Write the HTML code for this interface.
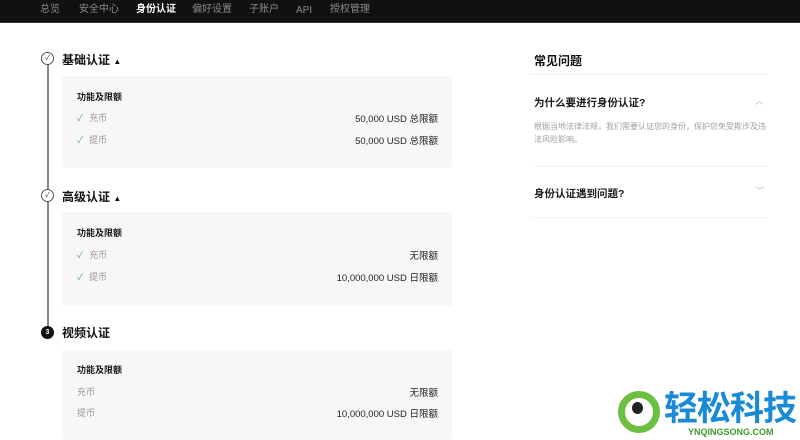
<!DOCTYPE html>
<html><head><meta charset="utf-8"><style>
*{margin:0;padding:0;box-sizing:border-box}
body{width:800px;height:437px;overflow:hidden;background:#fff;font-family:"Liberation Sans","Noto Sans CJK SC",sans-serif;position:relative;color:#1a1a1a}
.nav{position:absolute;left:0;top:0;width:800px;height:23px;background:#111;border-bottom:1px solid #333}
.nav span{position:absolute;top:3px;font-size:10px;line-height:14px;color:#8a8a8a}
.nav span.a{color:#fff;font-weight:bold}
.abs{position:absolute}
.h{font-size:12px;font-weight:bold;color:#111}
.card{position:absolute;left:62px;width:390px;background:#f7f7f7;border-radius:3px}
.t{font-size:9px;font-weight:bold;position:absolute;left:15px}
.l{font-size:9px;color:#999;position:absolute;left:15px}
.l .c{color:#5cae8a;margin-right:6px}
.r{font-size:9.5px;color:#222;position:absolute;right:14px}
.line{position:absolute;left:47px;width:2px;background:#888}
.circ{position:absolute;width:13px;height:13px;border-radius:50%;border:1.2px solid #555;background:#fff;font-size:7px;text-align:center;line-height:11px;color:#333}
</style></head><body>
<div class="nav">
<span style="left:40px">总览</span><span style="left:79px">安全中心</span><span class="a" style="left:136px">身份认证</span><span style="left:192px">偏好设置</span><span style="left:249px">子账户</span><span style="left:296px;top:4px">API</span><span style="left:330px">授权管理</span>
</div>
<div class="line" style="top:64px;height:262px"></div>
<div class="circ" style="left:41px;top:52px">✓</div>
<div class="circ" style="left:41px;top:189px">✓</div>
<div class="circ" style="left:41px;top:326px;background:#111;border-color:#111;color:#fff;font-weight:bold">3</div>
<div class="abs h" style="left:62px;top:51px">基础认证 <span style="font-size:8px">▲</span></div>
<div class="abs h" style="left:62px;top:188px">高级认证 <span style="font-size:8px">▲</span></div>
<div class="abs h" style="left:62px;top:324px">视频认证</div>

<div class="card" style="top:76px;height:92px">
<div class="t" style="top:14px">功能及限额</div>
<div class="l" style="top:35px"><span class="c">✓</span>充币</div><div class="r" style="top:35px">50,000 USD 总限额</div>
<div class="l" style="top:57px"><span class="c">✓</span>提币</div><div class="r" style="top:57px">50,000 USD 总限额</div>
</div>
<div class="card" style="top:212px;height:94px">
<div class="t" style="top:14px">功能及限额</div>
<div class="l" style="top:36px"><span class="c">✓</span>充币</div><div class="r" style="top:36px">无限额</div>
<div class="l" style="top:58px"><span class="c">✓</span>提币</div><div class="r" style="top:58px">10,000,000 USD 日限额</div>
</div>
<div class="card" style="top:350px;height:90px">
<div class="t" style="top:13px">功能及限额</div>
<div class="l" style="top:35px">充币</div><div class="r" style="top:35px">无限额</div>
<div class="l" style="top:56px">提币</div><div class="r" style="top:56px">10,000,000 USD 日限额</div>
</div>

<div class="abs h" style="left:534px;top:52px">常见问题</div>
<div class="abs" style="left:530px;top:74px;width:238px;height:1px;background:#f0f0f0"></div>
<div class="abs" style="left:534px;top:95px;font-size:10.5px;font-weight:bold">为什么要进行身份认证?</div>
<div class="abs" style="left:755px;top:94px;font-size:9px;color:#bbb">︿</div>
<div class="abs" style="left:534px;top:120px;width:232px;font-size:8px;line-height:13px;color:#a0a0a0">根据当地法律法规，我们需要认证您的身份，保护您免受欺诈及违法风险影响。</div>
<div class="abs" style="left:534px;top:166px;width:234px;height:1px;background:#f0f0f0"></div>
<div class="abs" style="left:534px;top:186px;font-size:10.5px;font-weight:bold">身份认证遇到问题?</div>
<div class="abs" style="left:755px;top:184px;font-size:9px;color:#bbb">﹀</div>
<div class="abs" style="left:530px;top:217px;width:238px;height:1px;background:#f4f4f4"></div>

<div class="abs" style="left:618px;top:391px;width:42px;height:42px;border-radius:50%;border:7px solid #6cbf3f;background:#fff"></div>
<div class="abs" style="left:632px;top:402px;width:11px;height:12px;border-radius:50%;background:#222"></div>
<div class="abs" style="left:664px;top:390px;font-size:34px;font-weight:bold;color:#1b8ad6;letter-spacing:-1px;line-height:38px">轻松科技</div>
<div class="abs" style="left:688px;top:427px;font-size:9px;font-weight:bold;color:#3c9b2c;line-height:10px">YNQINGSONG.COM</div>
</body></html>
